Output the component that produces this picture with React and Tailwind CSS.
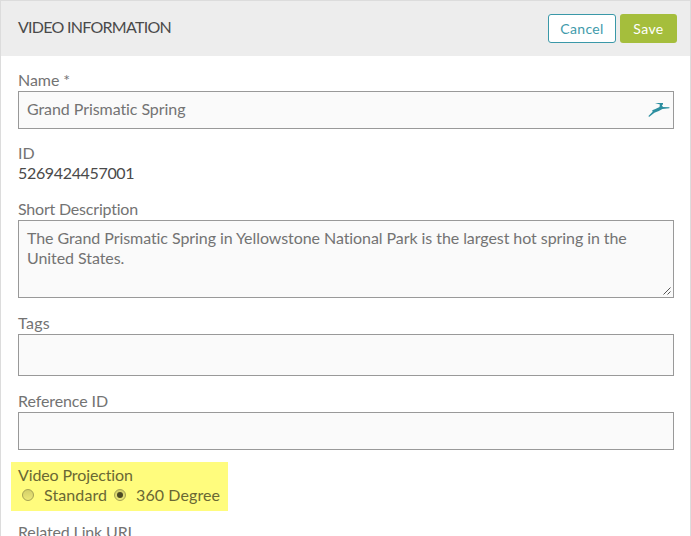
function Label({ children, className = '' }) {
  return (
    <div className={`h-5 leading-[18px] whitespace-nowrap text-[#737373] ${className}`}>{children}</div>
  )
}

function Bird() {
  return (
    <svg width="22" height="16" viewBox="0 0 22 16" aria-hidden="true">
      <path
        fill="#2d8fa0"
        d="M7 1.1 L15 1 L15 2.2 L13.9 3.6 L15 4.9 L21.5 5.2 L21.3 6.3 L14.4 7.1 L10.8 8.9 L6.4 10.7 L1 14.9 L.5 14 L4.6 9.8 L4.2 8.3 L7.4 7 L11.5 5.1 L11.9 2.5 Z"
      />
    </svg>
  )
}

function Radio({ checked }) {
  return (
    <span className="flex size-[12px] shrink-0 items-center justify-center rounded-full border border-[#a5a253] bg-gradient-to-b from-[#d3cf69] to-[#ece876]">
      {checked && <span className="size-[6px] rounded-full bg-[#4c4a23]" />}
    </span>
  )
}

export default function App() {
  return (
    <div className="h-[536px] w-[691px] overflow-hidden border-x border-t border-[#dcdcdc] bg-white font-['Lato','Liberation_Sans',sans-serif] text-[16px] leading-5">
      <header className="flex h-[55px] items-center justify-between bg-[#ededed] pr-[13px] pl-[17px]">
        <h1 className="pb-[3px] text-[16px] tracking-[-0.73px] text-[#4a4a4a]">VIDEO INFORMATION</h1>
        <div className="flex gap-1">
          <button className="h-[29px] w-[68px] rounded-[3px] border border-[#3a98a8] bg-white text-[14px] tracking-[0.35px] text-[#3f9bab]">
            Cancel
          </button>
          <button className="h-[29px] w-[57px] rounded-[3px] bg-[#a5be3c] text-[14px] tracking-[0.4px] text-white">
            Save
          </button>
        </div>
      </header>

      <main className="flex flex-col pt-[15px] pr-4 pl-[17px] tracking-[-0.07px]">
        <Label>Name *</Label>
        <div className="flex h-[38px] w-[656px] items-center justify-between border border-[#999] bg-[#fafafa] pr-[3px] pl-2 text-[#737373]">
          <span className="pb-[2px]">Grand Prismatic Spring</span>
          <Bird />
        </div>

        <Label className="mt-[15px]">ID</Label>
        <div className="h-5 leading-[18px] tracking-[-0.34px] text-[#4a4a4a]">5269424457001</div>

        <Label className="mt-4 tracking-[-0.2px]">Short Description</Label>
        <div className="relative h-[78px] w-[656px] border border-[#999] bg-[#fafafa] px-2 pt-[7px] text-[#737373]">
          The Grand Prismatic Spring in Yellowstone National Park is the largest hot spring in the
          <br />
          United States.
          <svg className="absolute right-[2px] bottom-[2px]" width="8" height="8" viewBox="0 0 8 8" aria-hidden="true">
            <path d="M.5 7.5 7.5.5M4.5 7.5l3-3" stroke="#555" strokeWidth="1" />
          </svg>
        </div>

        <Label className="mt-4 tracking-[0.3px]">Tags</Label>
        <div className="h-[42px] w-[656px] border border-[#999] bg-[#fafafa]" />

        <Label className="mt-4 tracking-[-0.1px]">Reference ID</Label>
        <div className="h-[38px] w-[656px] border border-[#999] bg-[#fafafa]" />

        <section className="mt-[12px] -ml-[7px] h-[49px] w-[217px] bg-[#fffc7d] pt-1 pl-[7px] text-[#6a6834]">
          <div className="h-5 leading-[18px] tracking-[-0.12px]">Video Projection</div>
          <div className="flex h-5 items-center pb-[2px] pl-1 tracking-[0.1px] whitespace-nowrap">
            <Radio />
            <span className="ml-[10px] w-[70px]">Standard</span>
            <Radio checked />
            <span className="ml-[10px]">360 Degree</span>
          </div>
        </section>

        <Label className="mt-[12px] tracking-[-0.15px]">Related Link URL</Label>
      </main>
    </div>
  )
}
